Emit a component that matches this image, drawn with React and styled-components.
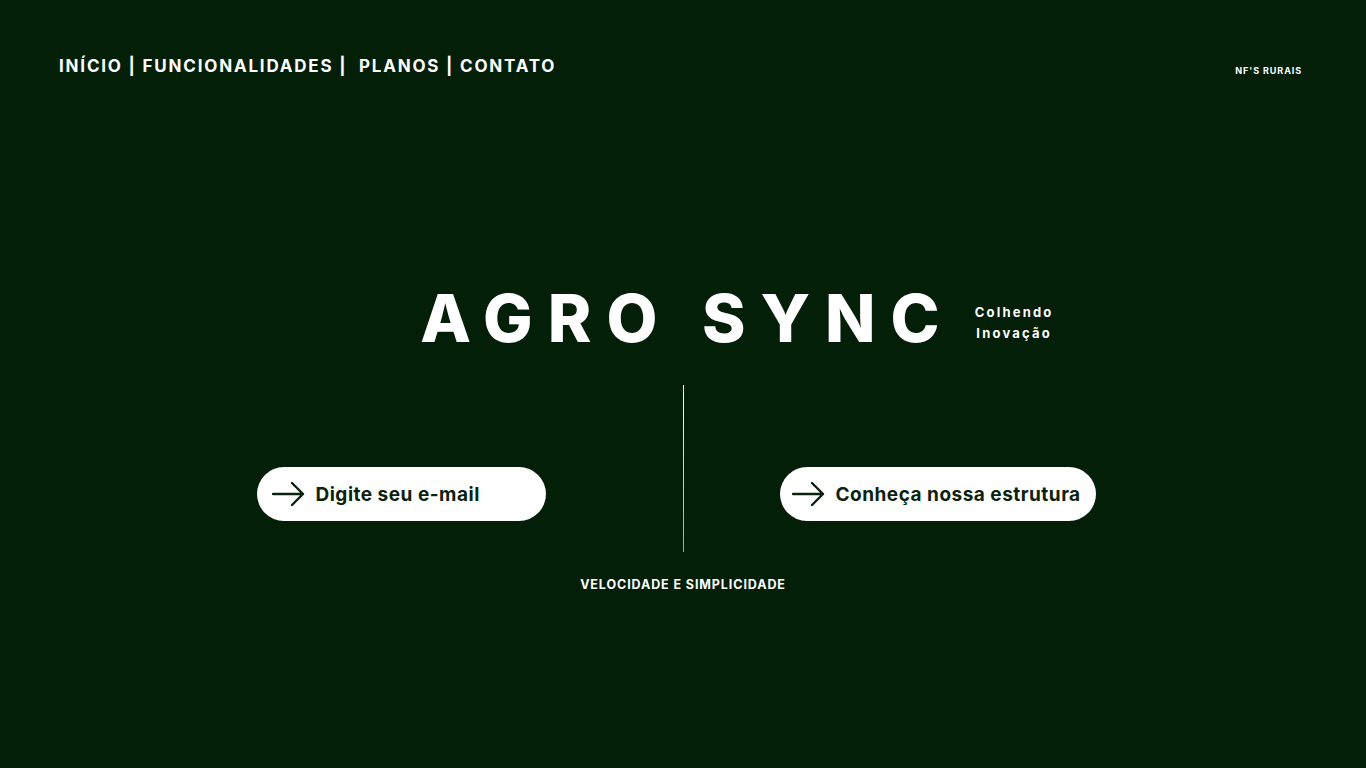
import React from "react";
import styled, { createGlobalStyle } from "styled-components";

const GlobalStyle = createGlobalStyle`
  html, body {
    margin: 0;
    padding: 0;
    background: #031f07;
  }
  body {
    font-family: "Inter", "Liberation Sans", sans-serif;
    color: #ffffff;
  }
`;

const Arrow = () => (
  <svg width="33" height="26" viewBox="0 0 33 26" fill="none">
    <path
      d="M1 13H31M20 2L31 13L20 24"
      stroke="#0b220d"
      strokeWidth="2.4"
      strokeLinecap="round"
      strokeLinejoin="round"
    />
  </svg>
);

const App = () => {
  return (
    <Root>
      <GlobalStyle />
      <Header>
        <Nav>INÍCIO | FUNCIONALIDADES |  PLANOS | CONTATO</Nav>
        <Brand>NF'S RURAIS</Brand>
      </Header>
      <Hero>
        <TitleRow>
          <span />
          <Title>AGRO SYNC</Title>
          <Tagline>
            Colhendo
            <br />
            Inovação
          </Tagline>
        </TitleRow>
        <Actions>
          <Side $align="end" $pad="0 137px 0 0">
            <PillButton $width={289} $pad={15}>
              <Arrow />
              Digite seu e-mail
            </PillButton>
          </Side>
          <Divider />
          <Side $align="start" $pad="0 0 0 96px">
            <PillButton $width={316} $pad={12}>
              <Arrow />
              Conheça nossa estrutura
            </PillButton>
          </Side>
        </Actions>
        <Footer>VELOCIDADE E SIMPLICIDADE</Footer>
      </Hero>
    </Root>
  );
};

const Root = styled.main`
  width: 1366px;
  height: 768px;
  background: #031f07;
  display: flex;
  flex-direction: column;
  overflow: hidden;
`;

const Header = styled.header`
  display: flex;
  justify-content: space-between;
  align-items: flex-start;
  padding: 55px 65px 0 59px;
`;

const Nav = styled.nav`
  font-size: 17px;
  font-weight: 700;
  letter-spacing: 1.8px;
  white-space: pre;
  line-height: 22px;
`;

const Brand = styled.div`
  font-size: 9px;
  font-weight: 700;
  letter-spacing: 0.9px;
  margin-top: 10px;
  margin-right: -1px;
`;

const Hero = styled.section`
  display: flex;
  flex-direction: column;
  align-items: center;
  margin-top: 203px;
`;

const TitleRow = styled.div`
  width: 100%;
  display: grid;
  grid-template-columns: 1fr auto 1fr;
  align-items: center;
`;

const Title = styled.h1`
  margin: 0 0 0 9px;
  font-size: 66px;
  font-weight: 800;
  letter-spacing: 15px;
  line-height: 76px;
`;

const Tagline = styled.div`
  font-size: 13px;
  font-weight: 700;
  letter-spacing: 2.2px;
  line-height: 21px;
  text-align: center;
  justify-self: start;
  margin-left: 20px;
  margin-top: 10px;
`;

const Actions = styled.div`
  width: 100%;
  display: grid;
  grid-template-columns: 1fr 1px 1fr;
  margin-top: 29px;
`;

const Side = styled.div`
  display: flex;
  justify-content: flex-${(p) => p.$align};
  align-items: flex-start;
  padding: ${(p) => p.$pad};
  padding-top: 82px;
`;

const Divider = styled.div`
  width: 1px;
  height: 167px;
  background: linear-gradient(#ffffff, #9aa89b);
`;

const PillButton = styled.button`
  display: flex;
  align-items: center;
  gap: 11px;
  width: ${(p) => p.$width}px;
  height: 54px;
  padding: 0 0 0 ${(p) => p.$pad}px;
  border: none;
  border-radius: 27px;
  background: #ffffff;
  color: #0b220d;
  font-family: inherit;
  font-size: 19px;
  font-weight: 700;
  letter-spacing: 0.5px;
  white-space: nowrap;
  cursor: pointer;
`;

const Footer = styled.div`
  margin-top: 25px;
  font-size: 12.5px;
  font-weight: 700;
  letter-spacing: 0.9px;
`;

export default App;
